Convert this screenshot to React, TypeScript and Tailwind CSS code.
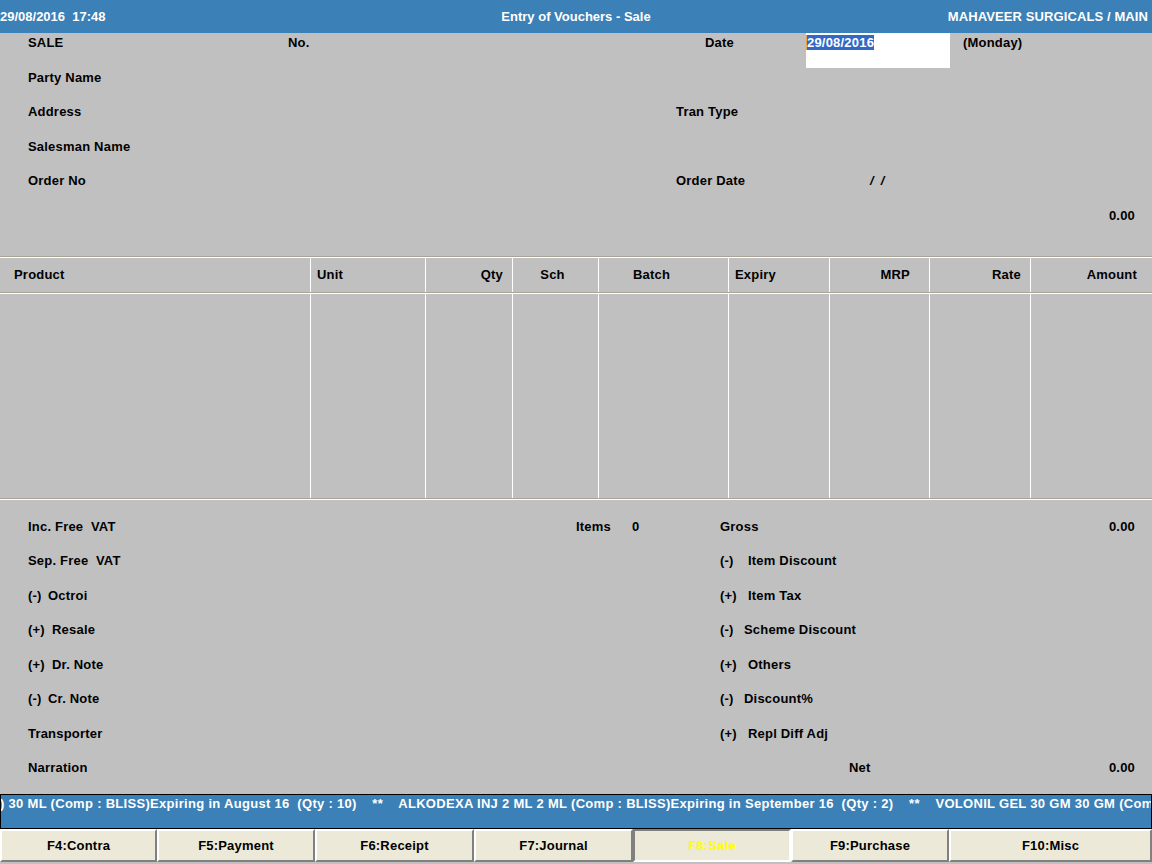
const cols = [
  { label: "Product", w: "w-[310px]", cls: "justify-start pl-[14px]" },
  { label: "Unit", w: "w-[115px]", cls: "justify-start pl-[6px]" },
  { label: "Qty", w: "w-[87px]", cls: "justify-end pr-[9px]" },
  { label: "Sch", w: "w-[86px]", cls: "justify-center pr-[6px]" },
  { label: "Batch", w: "w-[130px]", cls: "justify-center pr-[24px]" },
  { label: "Expiry", w: "w-[101px]", cls: "justify-start pl-[6px]" },
  { label: "MRP", w: "w-[100px]", cls: "justify-end pr-[19px]" },
  { label: "Rate", w: "w-[101px]", cls: "justify-end pr-[9px]" },
  { label: "Amount", w: "flex-1", cls: "justify-end pr-[15px]" },
];

const keys = [
  { label: "F4:Contra", w: "w-[157px]" },
  { label: "F5:Payment", w: "w-[158px]" },
  { label: "F6:Receipt", w: "w-[159px]" },
  { label: "F7:Journal", w: "w-[159px]" },
  { label: "F8:Sale", w: "w-[158px]", active: true },
  { label: "F9:Purchase", w: "w-[158px]" },
  { label: "F10:Misc", w: "flex-1" },
];

// left / middle / right cells of the totals block
const totals = [
  {
    left: <span>Inc. Free&nbsp; VAT</span>,
    mid: (
      <>
        <span className="w-[56px]">Items</span>
        <span>0</span>
      </>
    ),
    right: <span>Gross</span>,
    value: "0.00",
  },
  {
    left: <span>Sep. Free&nbsp; VAT</span>,
    right: (
      <>
        <span className="w-[28px]">(-)</span>
        <span>Item Discount</span>
      </>
    ),
  },
  {
    left: (
      <>
        <span className="w-[20px]">(-)</span>
        <span>Octroi</span>
      </>
    ),
    right: (
      <>
        <span className="w-[28px]">(+)</span>
        <span>Item Tax</span>
      </>
    ),
  },
  {
    left: (
      <>
        <span className="w-[24px]">(+)</span>
        <span>Resale</span>
      </>
    ),
    right: (
      <>
        <span className="w-[24px]">(-)</span>
        <span>Scheme Discount</span>
      </>
    ),
  },
  {
    left: (
      <>
        <span className="w-[24px]">(+)</span>
        <span>Dr. Note</span>
      </>
    ),
    right: (
      <>
        <span className="w-[28px]">(+)</span>
        <span>Others</span>
      </>
    ),
  },
  {
    left: (
      <>
        <span className="w-[20px]">(-)</span>
        <span>Cr. Note</span>
      </>
    ),
    right: (
      <>
        <span className="w-[24px]">(-)</span>
        <span>Discount%</span>
      </>
    ),
  },
  {
    left: <span>Transporter</span>,
    right: (
      <>
        <span className="w-[28px]">(+)</span>
        <span>Repl Diff Adj</span>
      </>
    ),
  },
  {
    left: <span>Narration</span>,
    right: <span className="pl-[129px]">Net</span>,
    value: "0.00",
  },
];

const ticker =
  ") 30 ML (Comp : BLISS)Expiring in August 16  (Qty : 10)    **    ALKODEXA INJ 2 ML 2 ML (Comp : BLISS)Expiring in September 16  (Qty : 2)    **    VOLONIL GEL 30 GM 30 GM (Comp : BLISS)";

function Row({ children }: { children: React.ReactNode }) {
  return <div className="flex h-[34.5px] items-start pt-[2px] leading-[15px]">{children}</div>;
}

export default function App() {
  return (
    <div className="w-[1152px] h-[864px] overflow-hidden bg-[#c0c0c0] flex flex-col text-[13px] font-bold text-black font-['Liberation_Sans',Arial,sans-serif]">
      {/* title bar */}
      <div className="h-[33px] shrink-0 bg-[#3b80b6] text-white flex items-center justify-between pr-[4px] leading-[15px]">
        <span className="whitespace-pre">29/08/2016  17:48</span>
        <span className="absolute left-0 right-0 text-center pointer-events-none">Entry of Vouchers - Sale</span>
        <span className="tracking-[0.1px]">MAHAVEER SURGICALS / MAIN</span>
      </div>

      {/* header fields */}
      <div className="h-[223px] shrink-0 flex flex-col pl-[28px] tracking-[0.2px]">
        <div className="flex h-[34.5px] items-start leading-[15px]">
          <span className="w-[260px] pt-[2px]">SALE</span>
          <span className="w-[417px] pt-[2px]">No.</span>
          <span className="w-[101px] pt-[2px]">Date</span>
          <div className="w-[144px] h-[35px] bg-white pt-[2px]">
            <span className="bg-[#3169c6] text-white border-l border-[#e8a040]">29/08/2016</span>
          </div>
          <span className="ml-[13px] pt-[2px]">(Monday)</span>
        </div>
        <Row>
          <span>Party Name</span>
        </Row>
        <Row>
          <span className="w-[648px]">Address</span>
          <span>Tran Type</span>
        </Row>
        <Row>
          <span>Salesman Name</span>
        </Row>
        <Row>
          <span className="w-[648px]">Order No</span>
          <span className="w-[194px]">Order Date</span>
          <span className="flex gap-[7px] italic">
            <span>/</span>
            <span>/</span>
          </span>
        </Row>
        <Row>
          <span className="ml-auto pr-[17px]">0.00</span>
        </Row>
      </div>

      {/* product grid */}
      <div className="shrink-0 border-t border-[#a8a498] tracking-[0.2px]">
        <div className="h-[36px] border-t border-white border-b border-b-[#a8a498] flex">
          {cols.map((c, i) => (
            <div
              key={c.label}
              className={`${c.w} h-full flex items-center ${c.cls} ${i > 0 ? "border-l border-white" : ""}`}
            >
              {c.label}
            </div>
          ))}
        </div>
        <div className="h-[206px] border-t border-white border-b border-b-[#a8a498] flex">
          {cols.map((c, i) => (
            <div key={c.label} className={`${c.w} h-full ${i > 0 ? "border-l border-white" : ""}`} />
          ))}
        </div>
      </div>

      {/* totals */}
      <div className="h-[295px] shrink-0 border-t border-white pt-[16.5px] flex flex-col tracking-[0.2px]">
        {totals.map((t, i) => (
          <Row key={i}>
            <div className="w-[576px] pl-[28px] flex">{t.left}</div>
            <div className="w-[144px] flex">{t.mid}</div>
            <div className="flex-1 flex">{t.right}</div>
            {t.value && <span className="pr-[17px]">{t.value}</span>}
          </Row>
        ))}
      </div>

      {/* ticker */}
      <div className="h-[35px] shrink-0 bg-[#3b80b6] border border-black text-white overflow-hidden pt-[1px] leading-[15px]">
        <div className="whitespace-pre ml-[-1px] tracking-[0.3px]">{ticker}</div>
      </div>

      {/* function keys */}
      <div className="h-[33px] shrink-0 flex tracking-[0.2px]">
        {keys.map((k) => (
          <div
            key={k.label}
            className={`${k.w} h-full bg-[#ece9d8] flex items-center justify-center border-2 ${
              k.active
                ? "border-t-[#808080] border-l-[#808080] border-b-white border-r-white text-[#ffff00]"
                : "border-t-white border-l-white border-b-[#808080] border-r-[#808080]"
            }`}
          >
            {k.label}
          </div>
        ))}
      </div>
    </div>
  );
}
